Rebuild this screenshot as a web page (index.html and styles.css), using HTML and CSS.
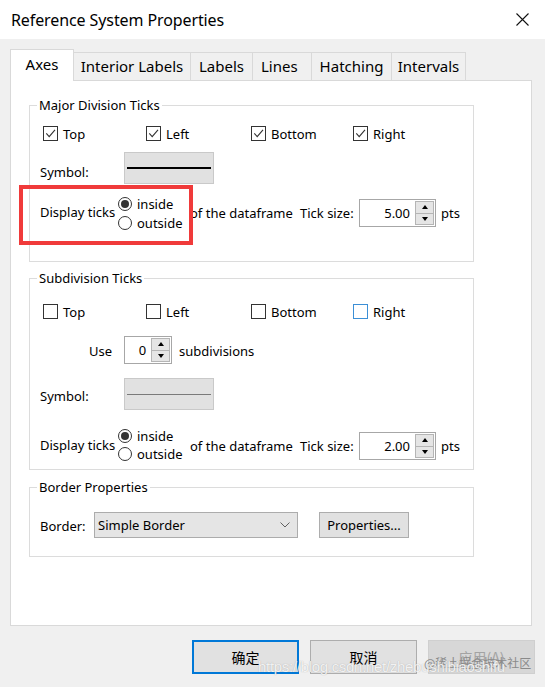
FILE: index.html
```html
<!DOCTYPE html>
<html>
<head>
<meta charset="utf-8">
<link rel="stylesheet" href="styles.css">
</head>
<body>
<div class="window">
  <div class="titlebar">
    <span class="title">Reference System Properties</span>
    <svg class="close" width="13" height="13" viewBox="0 0 13 13"><path d="M0.5 0.5 L12.5 12.5 M12.5 0.5 L0.5 12.5" stroke="#111" stroke-width="1.1" fill="none"/></svg>
  </div>
  <div class="main">
    <div class="tabs">
      <div class="tab active t-axes">Axes</div>
      <div class="tab t-interior">Interior Labels</div>
      <div class="tab t-labels">Labels</div>
      <div class="tab t-lines">Lines</div>
      <div class="tab t-hatch">Hatching</div>
      <div class="tab t-int">Intervals</div>
    </div>
    <div class="panel">
      <fieldset class="group major">
        <legend>Major Division Ticks</legend>
        <div class="checks">
          <div class="chk"><span class="box"><svg viewBox="0 0 13 13"><path d="M2.3 6.3 L5.2 9.6 L11 2.8" /></svg></span>Top</div>
          <div class="chk"><span class="box"><svg viewBox="0 0 13 13"><path d="M2.3 6.3 L5.2 9.6 L11 2.8" /></svg></span>Left</div>
          <div class="chk"><span class="box"><svg viewBox="0 0 13 13"><path d="M2.3 6.3 L5.2 9.6 L11 2.8" /></svg></span>Bottom</div>
          <div class="chk"><span class="box"><svg viewBox="0 0 13 13"><path d="M2.3 6.3 L5.2 9.6 L11 2.8" /></svg></span>Right</div>
        </div>
        <div class="symrow">
          <span class="lbl sym-lbl">Symbol:</span>
          <div class="symbox"><span class="line thick"></span></div>
        </div>
        <div class="disprow">
          <span class="lbl disp-lbl">Display ticks</span>
          <div class="radios">
            <div class="radio"><span class="circle on"></span>inside</div>
            <div class="radio"><span class="circle"></span>outside</div>
          </div>
          <span class="lbl of">of the dataframe</span>
          <span class="lbl ts">Tick size:</span>
          <div class="spin wide"><span class="val">5.00</span><span class="btns"><span class="up"></span><span class="dn"></span></span></div>
          <span class="lbl pts">pts</span>
        </div>
      </fieldset>

      <fieldset class="group sub">
        <legend>Subdivision Ticks</legend>
        <div class="checks">
          <div class="chk"><span class="box"></span>Top</div>
          <div class="chk"><span class="box"></span>Left</div>
          <div class="chk"><span class="box"></span>Bottom</div>
          <div class="chk"><span class="box hover"></span>Right</div>
        </div>
        <div class="userow">
          <span class="lbl">Use</span>
          <div class="spin narrow"><span class="val">0</span><span class="btns"><span class="up"></span><span class="dn"></span></span></div>
          <span class="lbl">subdivisions</span>
        </div>
        <div class="symrow">
          <span class="lbl sym-lbl">Symbol:</span>
          <div class="symbox"><span class="line thin"></span></div>
        </div>
        <div class="disprow">
          <span class="lbl disp-lbl">Display ticks</span>
          <div class="radios">
            <div class="radio"><span class="circle on"></span>inside</div>
            <div class="radio"><span class="circle"></span>outside</div>
          </div>
          <span class="lbl of">of the dataframe</span>
          <span class="lbl ts">Tick size:</span>
          <div class="spin wide"><span class="val">2.00</span><span class="btns"><span class="up"></span><span class="dn"></span></span></div>
          <span class="lbl pts">pts</span>
        </div>
      </fieldset>

      <fieldset class="group border">
        <legend>Border Properties</legend>
        <div class="borderrow">
          <span class="lbl">Border:</span>
          <div class="combo"><span>Simple Border</span><svg width="10" height="6" viewBox="0 0 10 6"><path d="M0.5 0.5 L5 5 L9.5 0.5" stroke="#606060" fill="none" stroke-width="1"/></svg></div>
          <div class="pbtn">Properties...</div>
        </div>
      </fieldset>
    </div>
    <div class="buttons">
      <div class="btn default">确定</div>
      <div class="btn">取消</div>
      <div class="btn disabled">应用(A)</div>
    </div>
  </div>
  <div class="highlight"></div>
  <div class="wm wm-cn">@稀土掘金技术社区</div>
  <div class="wm wm-url">https://blog.csdn.net/zhebushibiaoshifu</div>
</div>
</body>
</html>
```

FILE: styles.css
```css
* { box-sizing: border-box; }
html, body { margin: 0; padding: 0; }
body {
  width: 545px; height: 687px; overflow: hidden;
  background: #f0f0f0;
  font-family: "Noto Sans", "Noto Sans CJK SC", sans-serif;
  color: #000;
}
.window { position: relative; width: 545px; height: 687px; }
.titlebar {
  height: 39px; background: #fff;
  display: flex; align-items: center; justify-content: space-between;
  padding: 0 16px 0 11px;
}
.title { font-size: 16px; letter-spacing: -0.1px; }
.close { display: block; }
.main { padding: 0 13px 0 10px; }
.tabs { display: flex; height: 41px; align-items: flex-end; position: relative; z-index: 1; }
.tab {
  height: 28px; font-size: 15px; line-height: 27px;
  border: 1px solid #d9d9d9; border-bottom: none; border-left: none;
  background: #f0f0f0; text-align: center; color: #000;
}
.tab.active {
  height: 32px; background: #fff; border-left: 1px solid #d9d9d9;
  line-height: 29px; margin-bottom: -1px;
}
.t-axes { width: 64px; }
.t-interior { width: 117px; }
.t-labels { width: 62px; }
.t-lines { width: 59px; text-align: left; padding-left: 8px; }
.t-hatch { width: 80px; }
.t-int { width: 74px; }
.panel {
  background: #fff; border: 1px solid #d9d9d9;
  height: 546px; padding: 16px 0 0 18px;
}
.group {
  margin: 0; width: 445px;
  border: 1px solid #dcdcdc;
  padding: 0 0 0 10px;
  font-size: 13px;
}
.group legend {
  margin-left: -3px; padding: 0 2px; font-size: 13px; line-height: 16px;
}
.lbl { font-size: 13px; line-height: 16px; white-space: nowrap; }
.checks { display: grid; grid-template-columns: 103px 105px 102px auto; margin-left: 3px; }
.chk { display: flex; align-items: center; height: 15px; font-size: 13px; line-height: 16px; }
.box {
  width: 15px; height: 15px; border: 1px solid #333; background: #fff;
  margin-right: 5px; display: block; flex: none;
}
.box svg { display: block; width: 13px; height: 13px; }
.box svg path { stroke: #333; stroke-width: 1.1; fill: none; }
.box.hover { border-color: #3c8fd6; }

.major .checks { margin-top: 13px; }
.symrow { display: flex; align-items: flex-start; height: 32px; }
.sym-lbl { width: 84px; margin-top: 12px; }
.sub .sym-lbl { margin-top: 10px; }
.symbox {
  width: 90px; height: 32px; background: #e1e1e1; border: 1px solid #c9c9c9;
  display: flex; align-items: center; padding: 0 2px;
}
.line { display: block; width: 100%; }
.line.thick { height: 2px; background: #000; margin-top: -1px; }
.line.thin { height: 1px; background: #7a7a7a; margin-top: 1px; }
.major .symrow { margin-top: 11px; }

.disprow { display: flex; align-items: center; height: 28px; }
.disp-lbl { width: 78px; margin-top: -2px; }
.radios { display: flex; flex-direction: column; width: 72px; margin-top: 1px; }
.radio { display: flex; align-items: center; height: 19px; font-size: 13px; line-height: 16px; }
.circle {
  width: 14px; height: 14px; border: 1px solid #333; border-radius: 50%;
  background: #fff; margin-right: 5px; flex: none;
  display: flex; align-items: center; justify-content: center;
}
.circle.on::after { content: ""; width: 8px; height: 8px; border-radius: 50%; background: #333; }
.of { width: 110px; margin-top: -1px; }
.ts { width: 59px; margin-top: -1px; }
.pts { margin-left: 5px; margin-top: -1px; }
.major .disprow { margin-top: 15px; }

.spin {
  height: 28px; border: 1px solid #a7a7a7; background: #fff;
  display: flex; align-items: stretch;
}
.spin.wide { width: 77px; }
.spin.narrow { width: 48px; }
.val { flex: 1; text-align: right; font-size: 13px; line-height: 26px; padding-right: 5px; }
.btns { width: 20px; display: flex; flex-direction: column; padding: 1px 1px 1px 0; }
.btns span {
  flex: 1; background: #e5e5e5; border: 1px solid #b5b5b5;
  display: flex; align-items: center; justify-content: center;
}
.btns .dn { margin-top: -1px; }
.btns .up::after { content: ""; border: 3px solid transparent; border-bottom: 4px solid #000; border-top: none; }
.btns .dn::after { content: ""; border: 3px solid transparent; border-top: 4px solid #000; border-bottom: none; }

.major { height: 165px; }
.sub { margin-top: 8px; height: 200px; }
.sub .checks { margin-top: 18px; }
.userow { display: flex; align-items: center; height: 28px; margin-top: 17px; padding-left: 49px; }
.userow .spin { margin: 0 7px 0 12px; }
.userow .lbl { margin-top: 2px; }
.sub .symrow { margin-top: 14px; }
.sub .disprow { margin-top: 22px; }
.sub .radios { margin-top: -2px; }
.sub .radio { height: 18px; }

.border { margin-top: 9px; height: 78px; }
.borderrow { display: flex; align-items: center; margin-top: 17px; }
.borderrow .lbl { width: 54px; margin-top: 2px; }
.combo {
  width: 204px; height: 26px; background: #e5e5e5; border: 1px solid #acacac;
  display: flex; align-items: center; justify-content: space-between;
  padding: 0 7px 0 3px; font-size: 13px;
}
.pbtn {
  margin-left: 21px; width: 90px; height: 26px; background: #e1e1e1; border: 1px solid #adadad;
  display: flex; align-items: center; justify-content: center; font-size: 13px; margin-top: -1px;
}

.buttons { display: flex; justify-content: flex-end; gap: 11px; margin-top: 14px; margin-right: -3px; }
.btn {
  width: 107px; height: 34px; background: #e1e1e1; border: 1px solid #adadad;
  display: flex; align-items: center; justify-content: center;
  font-family: "Noto Sans CJK SC", sans-serif; font-size: 14px;
}
.btn.default { border: 2px solid #0078d7; }
.btn.disabled { background: #d7d7d7; border-color: #cfcfcf; color: #a3a3a3; }

.highlight {
  position: absolute; left: 19px; top: 185px; width: 174px; height: 60px;
  border: 4px solid #f03a3a;
}
.wm { position: absolute; white-space: nowrap; }
.wm-cn { left: 424px; top: 654px; font-family: "Noto Sans CJK SC", sans-serif; font-size: 12px; color: #8a8a8a; }
.wm-url { left: 258px; top: 658px; font-family: "Liberation Sans", sans-serif; font-size: 15px; color: rgba(255,255,255,0.85); text-shadow: 0 0 1px rgba(120,120,120,0.6); letter-spacing: -0.3px; }
```
